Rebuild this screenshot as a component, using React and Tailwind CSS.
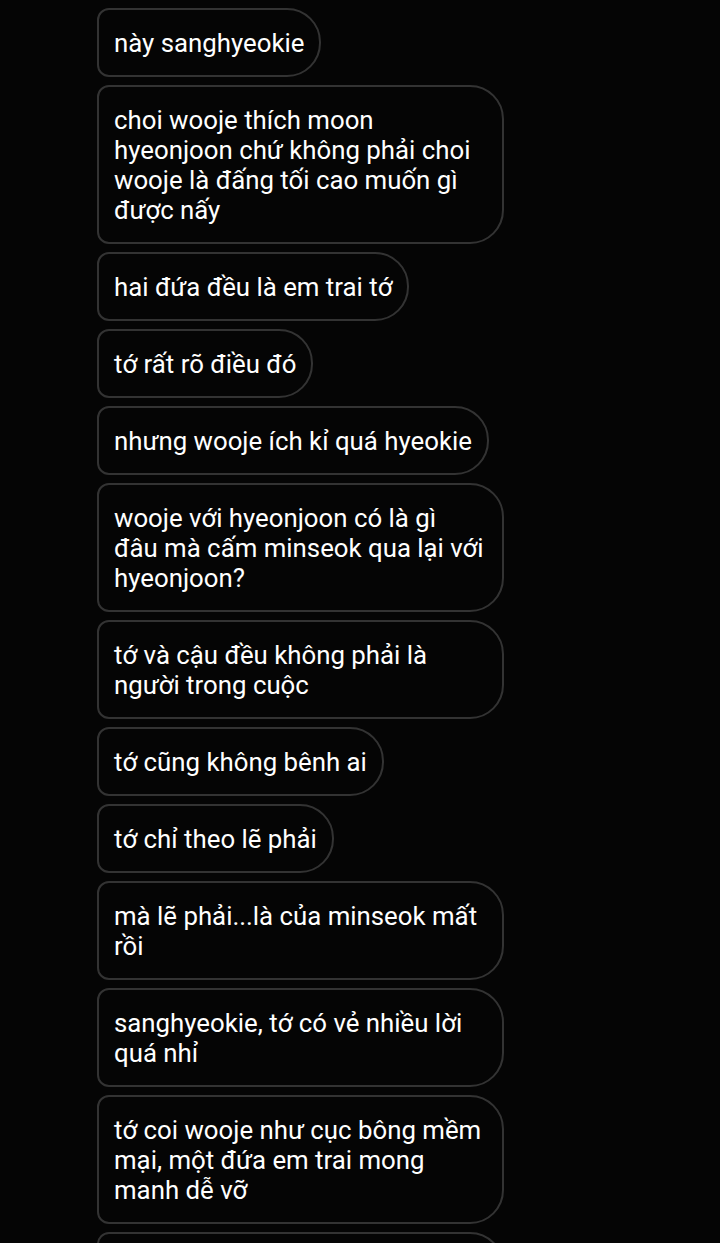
const MESSAGES = [
  "này sanghyeokie",
  "choi wooje thích moon hyeonjoon chứ không phải choi wooje là đấng tối cao muốn gì được nấy",
  "hai đứa đều là em trai tớ",
  "tớ rất rõ điều đó",
  "nhưng wooje ích kỉ quá hyeokie",
  "wooje với hyeonjoon có là gì\nđâu mà cấm minseok qua lại với hyeonjoon?",
  "tớ và cậu đều không phải là người trong cuộc",
  "tớ cũng không bênh ai",
  "tớ chỉ theo lẽ phải",
  "mà lẽ phải...là của minseok mất rồi",
  "sanghyeokie, tớ có vẻ nhiều lời quá nhỉ",
  "tớ coi wooje như cục bông mềm mại, một đứa em trai mong manh dễ vỡ",
];

function Bubble({ children, className = "" }) {
  return (
    <div
      className={
        "max-w-[407px] self-start whitespace-pre-line rounded-l-[12px] rounded-r-[34px] border-2 border-[#333333] bg-[#050505] px-[15px] py-[17.5px] text-[25.8px] leading-[30px] text-white " +
        className
      }
    >
      {children}
    </div>
  );
}

export default function App() {
  return (
    <div
      className="h-[1243px] w-[720px] overflow-hidden bg-[#050505] pl-[97px] pt-[8px]"
      style={{ fontFamily: "Roboto, 'Noto Sans', sans-serif" }}
    >
      <div className="flex flex-col gap-[8px]">
        {MESSAGES.map((m, i) => (
          <Bubble key={i}>{m}</Bubble>
        ))}
        {/* next message, cut off by the bottom of the screen */}
        <Bubble className="w-[407px]">{"\u00a0"}</Bubble>
      </div>
    </div>
  );
}
